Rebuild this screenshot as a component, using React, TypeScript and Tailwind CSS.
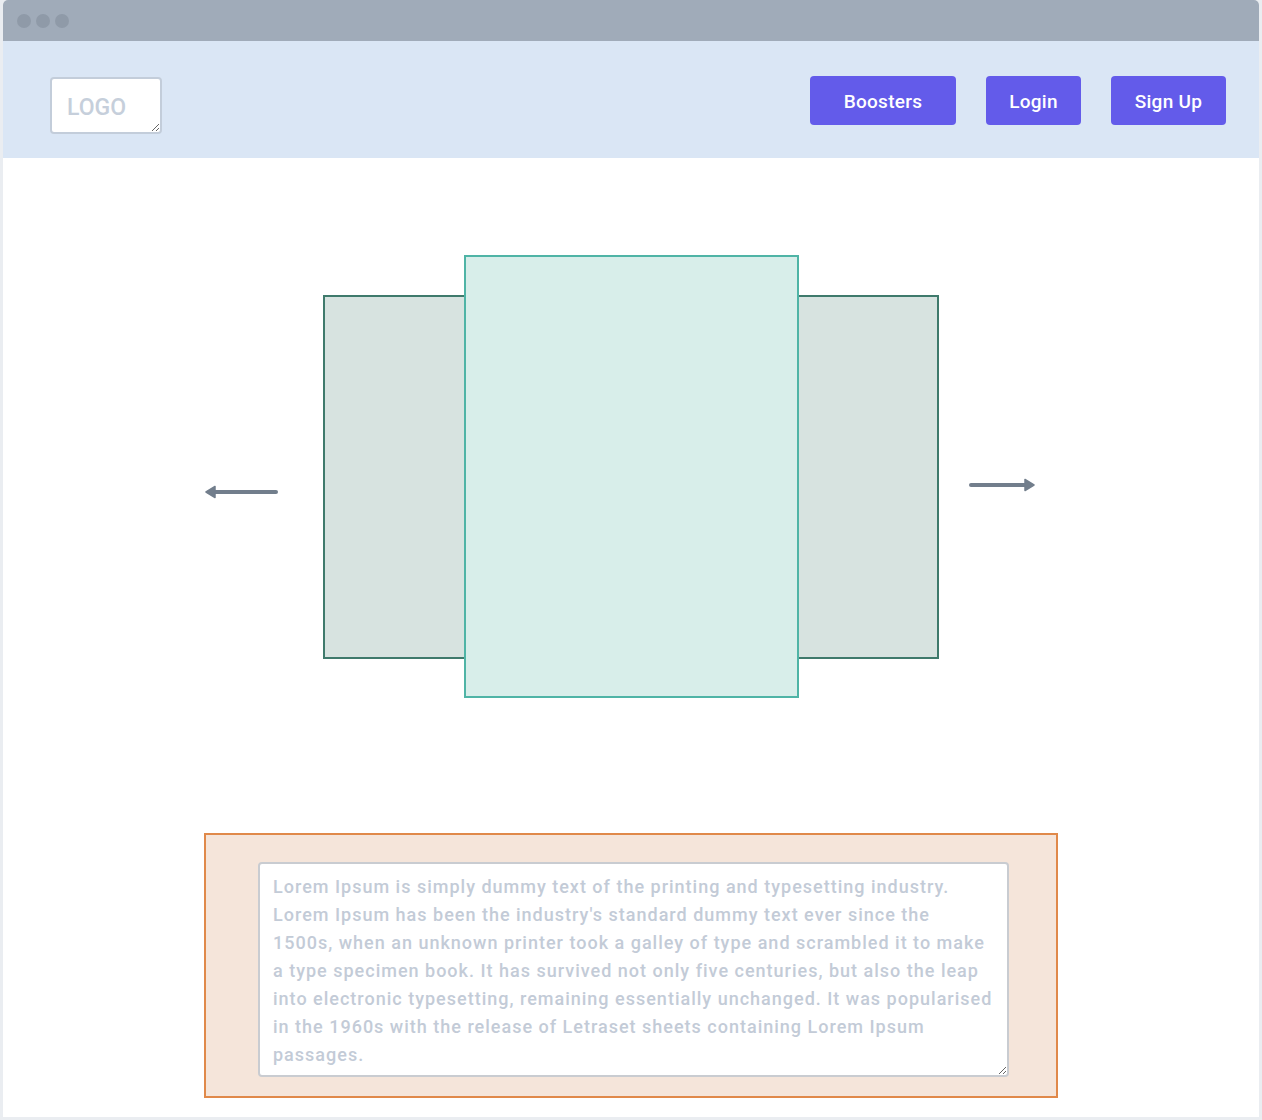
import React from "react";

const font = { fontFamily: "Roboto, 'Liberation Sans', sans-serif" };

const lorem = [
  "Lorem Ipsum is simply dummy text of the printing and typesetting industry.",
  "Lorem Ipsum has been the industry's standard dummy text ever since the",
  "1500s, when an unknown printer took a galley of type and scrambled it to make",
  "a type specimen book. It has survived not only five centuries, but also the leap",
  "into electronic typesetting, remaining essentially unchanged. It was popularised",
  "in the 1960s with the release of Letraset sheets containing Lorem Ipsum",
  "passages.",
].join("\n");

const NavButton = ({ label, width }: { label: string; width: string }) => (
  <button
    className={`${width} flex h-[49px] items-center justify-center rounded-[4px] bg-[#635bea] pt-[3px] text-[19px] font-medium tracking-[0.3px] text-white`}
  >
    {label}
  </button>
);

const Arrow = ({ dir, width }: { dir: "left" | "right"; width: number }) => (
  <svg
    width={width}
    height="14"
    viewBox={`0 0 ${width} 14`}
    className={dir === "right" ? "-scale-x-100" : ""}
  >
    <line x1="8" y1="7" x2={width - 2} y2="7" stroke="#727e8c" strokeWidth="4" strokeLinecap="round" />
    <path d="M1 7 L10 1.5 L10 12.5 Z" fill="#727e8c" stroke="#727e8c" strokeWidth="1.5" strokeLinejoin="round" />
  </svg>
);

const App = () => {
  return (
    <div className="h-[1120px] w-[1262px] bg-[#eaedf1] px-[3px] pb-[3px]" style={font}>
      <div className="flex h-full flex-col overflow-hidden rounded-t-[5px] bg-white">
        {/* window bar */}
        <div className="flex h-[41px] items-center gap-[5px] bg-[#a0abb9] pl-[14px]">
          <span className="h-[14px] w-[14px] rounded-full bg-[#8f9aa8]" />
          <span className="h-[14px] w-[14px] rounded-full bg-[#8f9aa8]" />
          <span className="h-[14px] w-[14px] rounded-full bg-[#8f9aa8]" />
        </div>

        {/* header */}
        <header className="flex h-[117px] items-start justify-between bg-[#dae6f5] pl-[47px] pr-[33px] pt-[35px]">
          <textarea
            placeholder="LOGO"
            className="mt-[1px] h-[57px] w-[112px] resize rounded-[4px] border-2 border-[#c3cdda] bg-white px-[15px] pt-[15px] text-[23px] font-medium leading-[27px] outline-none placeholder:text-[#c6cfdb]"
          />
          <div className="flex gap-[30px]">
            <NavButton label="Boosters" width="w-[146px]" />
            <NavButton label="Login" width="w-[95px]" />
            <NavButton label="Sign Up" width="w-[115px]" />
          </div>
        </header>

        {/* carousel */}
        <div className="mt-[97px] grid grid-cols-[1fr_auto_1fr] items-start">
          <div className="mr-[45px] mt-[230px] justify-self-end">
            <Arrow dir="left" width={73} />
          </div>
          <div className="flex items-center">
            <div className="h-[364px] w-[141px] border-2 border-r-0 border-[#3f7a6c] bg-[#d7e3e0]" />
            <div className="h-[443px] w-[335px] border-2 border-[#4fb4a6] bg-[#d8eeea]" />
            <div className="h-[364px] w-[140px] border-2 border-l-0 border-[#3f7a6c] bg-[#d7e3e0]" />
          </div>
          <div className="ml-[30px] mt-[223px] justify-self-start">
            <Arrow dir="right" width={66} />
          </div>
        </div>

        {/* text block */}
        <div className="mt-[135px] flex justify-center">
          <div className="w-[854px] border-2 border-[#e0894a] bg-[#f5e5da] pb-[19px] pl-[52px] pr-[47px] pt-[27px]">
            <textarea
              placeholder={lorem}
              className="block h-[215px] w-[751px] rounded-[4px] border-2 border-[#c9ccd1] bg-white pl-[13px] pr-[6px] pt-[9px] text-[18px] font-medium leading-[28px] tracking-[1px] outline-none placeholder:text-[#c3cbd7]"
            />
          </div>
        </div>
      </div>
    </div>
  );
};

export default App;
